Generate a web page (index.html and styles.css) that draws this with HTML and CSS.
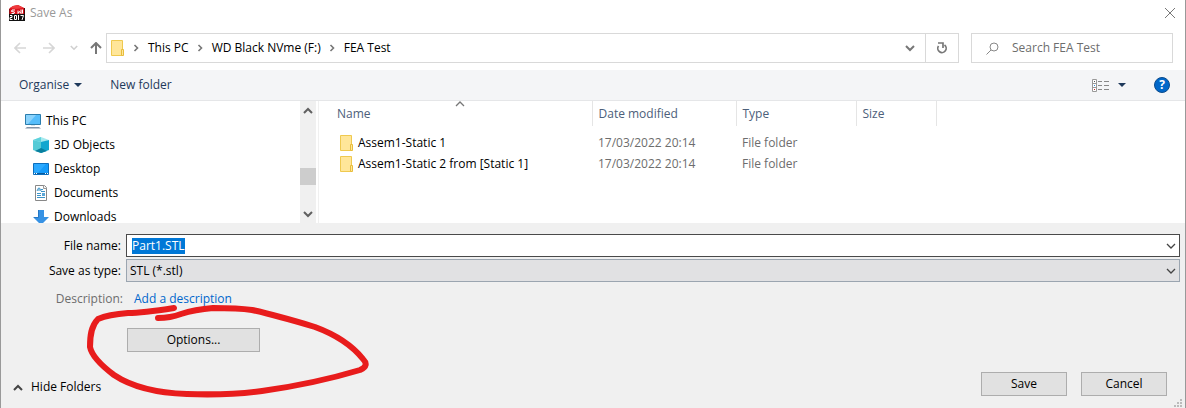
FILE: index.html
```html
<!DOCTYPE html>
<html lang="en">

<head>
    <meta charset="UTF-8">
    <meta name="viewport" content="width=device-width, initial-scale=1.0">
    <title>Save As</title>
    <link rel="stylesheet" href="styles.css">
</head>

<body>
    <svg class="defs" width="0" height="0" aria-hidden="true">
        <symbol id="folder" viewBox="0 0 14 16">
            <path d="M.5.5h11v15H.5z" fill="#ffe699" stroke="#efc94f" />
            <path d="M10.500 9.500h2v6h-2z" fill="#ffe699" stroke="#e8bd3c" />
        </symbol>
        <symbol id="crumb" viewBox="0 0 6 8">
            <path d="M1.500 1l3 3-3 3" fill="none" stroke="#777" stroke-width="1.600" />
        </symbol>
        <symbol id="chevron" viewBox="0 0 10 6">
            <path d="M1 1l4 4 4-4" fill="none" stroke="currentColor" stroke-width="1.300" />
        </symbol>
        <symbol id="bold-chevron" viewBox="0 0 10 7">
            <path d="M1 1l4 4 4-4" fill="none" stroke="currentColor" stroke-width="2" />
        </symbol>
        <symbol id="caret" viewBox="0 0 8 4">
            <path d="M0 0h8L4 4z" fill="#1e395b" />
        </symbol>
    </svg>

    <div class="dialog">
        <header class="title-bar">
            <svg width="16" height="16" viewBox="0 0 16 16" aria-hidden="true">
                <path d="M1 3l3-2 5-1 6 3v7H0V4z" fill="#d8121c" />
                <path d="M1 3l3-2 5-1 6 3-8 1z" fill="#ef3a3d" />
                <path d="M0 4v6M15.500 3v7" stroke="#4a0809" />
                <path d="M6 5H3L2.500 6.500l3 .5L5 8.500H2.500M9 5.500v3l1.500-2 1.500 2v-4M13.500 4.500v4" fill="none" stroke="#fff" />
                <path d="M0 9h16v7H0z" fill="#111" />
                <path d="M1 10.500h2v2H1v2h2.500M5.500 10.500h2v4h-2zM9.500 10v5M11.500 10.500h3L13 15" fill="none" stroke="#fff" />
            </svg>
            <h1>Save As</h1>
            <button type="button" class="plain" aria-label="Close">
                <svg width="12" height="12" viewBox="0 0 12 12"><path d="M1 1l10 10M11 1L1 11" stroke="#777" /></svg>
            </button>
        </header>

        <nav class="nav-bar">
            <div class="nav-buttons">
                <button type="button" class="plain" aria-label="Back">
                    <svg width="12" height="12" viewBox="0 0 12 12"><path d="M12 6H1M6 1L1 6l5 5" fill="none" stroke="#d6d6d6" stroke-width="1.600" /></svg>
                </button>
                <button type="button" class="plain" aria-label="Forward">
                    <svg width="12" height="12" viewBox="0 0 12 12"><path d="M0 6h11M6 1l5 5-5 5" fill="none" stroke="#d6d6d6" stroke-width="1.600" /></svg>
                </button>
                <button type="button" class="plain recent" aria-label="Recent locations">
                    <svg width="8" height="6"><use href="#bold-chevron" /></svg>
                </button>
                <button type="button" class="plain" aria-label="Up">
                    <svg width="12" height="12" viewBox="0 0 12 12"><path d="M6 12V1M1 6l5-5 5 5" fill="none" stroke="#777" stroke-width="2" /></svg>
                </button>
            </div>
            <div class="address">
                <svg width="14" height="16"><use href="#folder" /></svg>
                <svg width="6" height="8"><use href="#crumb" /></svg>
                <a href="#">This PC</a>
                <svg width="6" height="8"><use href="#crumb" /></svg>
                <a href="#">WD Black NVme (F:)</a>
                <svg width="6" height="8"><use href="#crumb" /></svg>
                <a href="#">FEA Test</a>
                <button type="button" class="plain history" aria-label="Previous locations">
                    <svg width="10" height="7"><use href="#bold-chevron" /></svg>
                </button>
                <button type="button" class="plain refresh" aria-label="Refresh">
                    <svg width="12" height="12" viewBox="0 0 12 12">
                        <path d="M8.500 3a4.200 4.200 0 1 1-6 1" fill="none" stroke="#777" stroke-width="1.700" />
                        <path d="M2 1h5v5" fill="none" stroke="#777" stroke-width="1.700" />
                    </svg>
                </button>
            </div>
            <label class="search">
                <svg width="13" height="13" viewBox="0 0 13 13" aria-hidden="true">
                    <circle cx="8" cy="5" r="4" fill="none" stroke="#888" />
                    <path d="M5 8l-4.500 4.500" stroke="#888" />
                </svg>
                <input type="text" placeholder="Search FEA Test" aria-label="Search FEA Test">
            </label>
        </nav>

        <div class="toolbar">
            <button type="button" class="plain">Organise <svg width="8" height="4"><use href="#caret" /></svg></button>
            <button type="button" class="plain">New folder</button>
            <button type="button" class="plain view" aria-label="Change your view">
                <svg width="17" height="13" viewBox="0 0 17 13">
                    <path d="M.5.500h4v12h-4zM.5 4.500h4M.5 8.500h4" fill="#fff" stroke="#999" />
                    <path d="M6 2.500h4M12 2.500h5M6 6.500h4M12 6.500h5M6 10.500h4M12 10.500h5" stroke="#888" />
                    <path d="M2 2h1v1H2z" fill="#555" />
                    <path d="M2 6h1v1H2z" fill="#2d8ae0" />
                    <path d="M2 10h1v1H2z" fill="#c22" />
                </svg>
                <svg width="8" height="4"><use href="#caret" /></svg>
            </button>
            <button type="button" class="plain help" aria-label="Help">?</button>
        </div>

        <main class="browser">
            <ul class="tree">
                <li class="root">
                    <svg width="16" height="16" viewBox="0 0 16 16">
                        <path d="M.5 1.500h15v10H.5z" fill="#55bdfb" stroke="#2b7dad" />
                        <path d="M1 2h10L3 11H1z" fill="#8bd3fc" />
                        <path d="M6 12h4v1H6z" fill="#d4e4ee" />
                        <path d="M2 14h12l2 1.500H0z" fill="#8294a8" />
                    </svg>
                    <a href="#">This PC</a>
                </li>
                <li>
                    <svg width="16" height="16" viewBox="0 0 16 16">
                        <path d="M0 3l8-3 8 3-8 3z" fill="#a5e9ee" />
                        <path d="M0 3l8 2v11l-8-3z" fill="#55cbd6" />
                        <path d="M8 5l8-2v10l-8 3z" fill="#12a7cf" />
                        <path d="M8 11l-6 3 6 2 6-2z" fill="#087f9e" />
                        <path d="M0 3l8-3v5z" fill="#5ed2dc" />
                    </svg>
                    <a href="#">3D Objects</a>
                </li>
                <li>
                    <svg width="16" height="16" viewBox="0 0 16 16">
                        <path d="M.5 2.500h15v11H.5z" fill="#149bfa" stroke="#0d6ebc" />
                        <path d="M1 3h12L5 12H1z" fill="#2ba9ff" />
                        <path d="M1 12h14v1H1z" fill="#075a9c" />
                        <path d="M1 12h1v1H1zM3 12h1v1H3zM12 12h1v1h-1zM14 12h1v1h-1z" fill="#fff" />
                    </svg>
                    <a href="#">Desktop</a>
                </li>
                <li>
                    <svg width="16" height="16" viewBox="0 0 16 16">
                        <path d="M2.500.5h9l2 2v13h-11z" fill="#fff" stroke="#888" />
                        <path d="M10.500.5v3h3" fill="#eee" stroke="#999" />
                        <path d="M4 6l1.500-3h1L8 6M5 5h2M8 4.500h2M8 6.500h4M4 8.500h4M4 10.500h4M4 12.500h8" fill="none" stroke="#3b94c9" />
                        <path d="M9 8h3v3H9z" fill="#5ba7d8" />
                    </svg>
                    <a href="#">Documents</a>
                </li>
                <li>
                    <svg width="16" height="16" viewBox="0 0 16 16">
                        <path d="M5 1h6v7h5l-8 8-8-8h5z" fill="#3792e4" />
                        <path d="M5.500 1v7.500H1" fill="none" stroke="#2678c4" />
                    </svg>
                    <a href="#">Downloads</a>
                </li>
            </ul>
            <div class="scrollbar" aria-hidden="true">
                <svg class="up" width="10" height="7"><use href="#bold-chevron" /></svg>
                <div class="track">
                    <div class="thumb"></div>
                </div>
                <svg width="10" height="7"><use href="#bold-chevron" /></svg>
            </div>
            <div class="files">
                <table>
                    <colgroup>
                        <col class="col-name">
                        <col class="col-date">
                        <col class="col-type">
                        <col class="col-size">
                        <col>
                    </colgroup>
                    <thead>
                        <tr>
                            <th>Name<svg class="sort up" width="10" height="6"><use href="#chevron" /></svg></th>
                            <th>Date modified</th>
                            <th>Type</th>
                            <th>Size</th>
                            <td></td>
                        </tr>
                    </thead>
                    <tbody>
                        <tr>
                            <td><div class="file"><svg width="14" height="16"><use href="#folder" /></svg>Assem1-Static 1</div></td>
                            <td>17/03/2022 20:14</td>
                            <td>File folder</td>
                            <td></td>
                            <td></td>
                        </tr>
                        <tr>
                            <td><div class="file"><svg width="14" height="16"><use href="#folder" /></svg>Assem1-Static 2 from [Static 1]</div></td>
                            <td>17/03/2022 20:14</td>
                            <td>File folder</td>
                            <td></td>
                            <td></td>
                        </tr>
                    </tbody>
                </table>
            </div>
        </main>

        <form class="save-form">
            <div class="fields">
                <label for="file-name">File name:</label>
                <div class="combo">
                    <input type="text" id="file-name" value="Part1.STL" autocomplete="off" spellcheck="false">
                    <svg width="10" height="6"><use href="#chevron" /></svg>
                </div>
                <label for="file-type">Save as type:</label>
                <div class="combo type">
                    <select id="file-type">
                        <option>STL (*.stl)</option>
                    </select>
                    <svg width="10" height="6"><use href="#chevron" /></svg>
                </div>
            </div>
            <div class="description">
                <span>Description:</span>
                <a href="#">Add a description</a>
            </div>
            <button type="button" class="button options">Options...</button>
            <div class="actions">
                <button type="button" class="plain hide-folders">
                    <svg class="up" width="10" height="7"><use href="#bold-chevron" /></svg>
                    Hide Folders
                </button>
                <button type="submit" class="button">Save</button>
                <button type="button" class="button">Cancel</button>
            </div>
            <svg class="marker" width="290" height="104" viewBox="85 300 290 104" aria-hidden="true">
                <path d="M174 308C155 311 140 313 128 313C115 314 105 316 98 319C91 326 90 336 90 347C92 357 102 366 114 375C132 387 157 393 187 394C215 395 240 394 262 391C298 386 330 379 360 370C367 367 367 363 363 359C351 344 334 334 315 327C295 321 275 315 252 310C238 308 225 308 213 308C200 309 190 311 181 314C173 317 165 318 158 318" />
            </svg>
            <svg class="grip" width="8" height="8" viewBox="0 0 8 8" aria-hidden="true">
                <path d="M6 0h2v2H6zM3 3h2v2H3zM6 3h2v2H6zM0 6h2v2H0zM3 6h2v2H3zM6 6h2v2H6z" fill="#bbb" />
            </svg>
        </form>
    </div>

    <script>
        // Preselect the file name so typing replaces it
        const fileName = document.getElementById("file-name");
        fileName.focus();
        fileName.select();
    </script>
</body>

</html>
```
FILE: styles.css
```css
* {
    box-sizing: border-box;
}

body {
    margin: 0;
    font-family: "Open Sans", "Noto Sans", sans-serif;
    font-size: 12px;
    line-height: 16px;
    color: #000;
}

input,
select,
button {
    font: inherit;
    color: inherit;
}

a {
    color: inherit;
    text-decoration: none;
}

svg {
    display: block;
    flex: none;
}

.defs {
    position: absolute;
}

.plain {
    display: flex;
    align-items: center;
    padding: 0;
    border: 0;
    background: none;
}

.up {
    transform: rotate(180deg);
}

.dialog {
    display: flex;
    flex-direction: column;
    height: 100vh;
    border: solid #999;
    border-width: 0 1px;
    background: #fff;
}

/* Title bar */
.title-bar {
    display: flex;
    align-items: center;
    gap: 5px;
    height: 25px;
    padding: 0 9px 0 8px;
}

.title-bar h1 {
    flex: 1;
    margin: 0;
    font-size: 12px;
    font-weight: normal;
    color: #999;
}

/* Address and search */
.nav-bar {
    display: flex;
    gap: 12px;
    padding: 8px 12px 7px 13px;
}

.nav-buttons {
    display: flex;
    align-items: center;
    gap: 17px;
    width: 81px;
}

.nav-buttons .recent {
    margin: 0 -5px 0 -2px;
    color: #d0d0d0;
}

.address,
.search {
    display: flex;
    align-items: center;
    height: 30px;
    border: 1px solid #d9d9d9;
}

.address {
    flex: 1;
    gap: 8px;
    padding-left: 4px;
}

.address a {
    margin-left: 1px;
}

.history {
    margin: 0 2px 0 auto;
    color: #777;
}

.refresh {
    align-self: stretch;
    justify-content: center;
    width: 33px;
    border-left: 1px solid #d9d9d9;
}

.search {
    gap: 13px;
    width: 202px;
    padding-left: 14px;
}

.search input {
    flex: 1;
    min-width: 0;
    padding: 0;
    border: 0;
    outline: 0;
}

.search input::placeholder {
    color: #6d6d6d;
}

.nav-bar .address {
    margin-left: -1px;
}

/* Toolbar */
.toolbar {
    display: flex;
    align-items: center;
    gap: 28px;
    height: 31px;
    padding: 0 15px 0 18px;
    border-bottom: 1px solid #e5e6e8;
    background: #f4f5f7;
    color: #1e395b;
}

.toolbar .plain {
    gap: 5px;
}

.toolbar .view {
    gap: 9px;
    margin-left: auto;
}

.toolbar .help {
    justify-content: center;
    width: 16px;
    height: 16px;
    border: 1px solid #0b4b8c;
    border-radius: 50%;
    background: #0067c9;
    color: #fff;
    font-weight: bold;
}

/* Folder tree and file list */
.browser {
    display: flex;
    flex: 1;
    min-height: 0;
    overflow: hidden;
}

.tree {
    width: 299px;
    margin: 0;
    padding: 8px 0 0 32px;
    list-style: none;
}

.tree li {
    display: flex;
    align-items: center;
    gap: 5px;
    height: 24px;
}

.tree .root {
    margin-left: -8px;
}

.scrollbar {
    display: flex;
    flex-direction: column;
    align-items: center;
    width: 16px;
    padding: 6px 0 5px;
    background: #f0f0f0;
    color: #606060;
}

.track {
    flex: 1;
    width: 100%;
    padding-top: 54px;
}

.thumb {
    height: 17px;
    background: #cdcdcd;
}

.files {
    flex: 1;
    margin-left: 2px;
    border-left: 1px solid #f0f0f0;
}

table {
    width: 100%;
    table-layout: fixed;
    border-collapse: collapse;
}

.col-name {
    width: 273px;
}

.col-date {
    width: 144px;
}

.col-type {
    width: 120px;
}

.col-size {
    width: 80px;
}

th {
    position: relative;
    height: 25px;
    padding: 0 6px;
    border-right: 1px solid #e5e5e5;
    font-weight: normal;
    text-align: left;
    color: #4c607a;
}

th:first-child {
    padding-left: 18px;
}

.sort {
    position: absolute;
    top: 0;
    left: 50%;
    color: #777;
}

tbody::before {
    content: "";
    display: block;
    height: 6px;
}

td {
    height: 21px;
    padding: 0 6px;
    color: #6d6d6d;
}

td:first-child {
    padding-left: 21px;
    color: #000;
}

.file {
    display: flex;
    align-items: center;
    gap: 4px;
}

/* File name, type and buttons */
.save-form {
    position: relative;
    padding: 11px 5px 12px 0;
    background: #f0f0f0;
}

.fields {
    display: grid;
    grid-template-columns: 120px 1fr;
    align-items: center;
    gap: 2px 5px;
}

.fields label {
    text-align: right;
}

.combo {
    display: grid;
    align-items: center;
    height: 23px;
    border: 1px solid #4a4a4a;
    background: #fff;
    color: #444;
}

.combo input,
.combo select,
.combo svg {
    grid-area: 1 / 1;
}

.combo input,
.combo select {
    width: 100%;
    height: 16px;
    padding: 0 24px 0 5px;
    border: 0;
    outline: 0;
    background: none;
    color: #000;
    appearance: none;
}

.combo input::selection {
    background: #0078d7;
    color: #fff;
}

.combo svg {
    justify-self: end;
    margin-right: 3px;
    pointer-events: none;
}

.combo.type {
    border-color: #9ba5b0;
    background: #e1e1e3;
}

.combo.type select {
    padding-left: 3px;
}

.description {
    display: grid;
    grid-template-columns: 122px 1fr;
    gap: 11px;
    margin-top: 9px;
}

.description span {
    text-align: right;
    color: #6d6d6d;
}

.description a {
    color: #0066cc;
}

.button {
    width: 86px;
    height: 24px;
    padding: 0;
    border: 1px solid #adadad;
    background: #e1e1e1;
}

.options {
    display: block;
    width: 133px;
    margin: 21px 0 0 126px;
}

.actions {
    display: flex;
    align-items: center;
    gap: 14px;
    margin-top: 20px;
    padding: 0 13px 0 12px;
}

.hide-folders {
    gap: 8px;
    margin-right: auto;
    padding-top: 6px;
}

.hide-folders svg {
    color: #444;
}

/* Freehand circle round the options button */
.marker {
    position: absolute;
    top: 77px;
    left: 84px;
    pointer-events: none;
}

.marker path {
    fill: none;
    stroke: #e81c1c;
    stroke-width: 6;
    stroke-linecap: round;
    stroke-linejoin: round;
}

.grip {
    position: absolute;
    right: 3px;
    bottom: 1px;
}
```
